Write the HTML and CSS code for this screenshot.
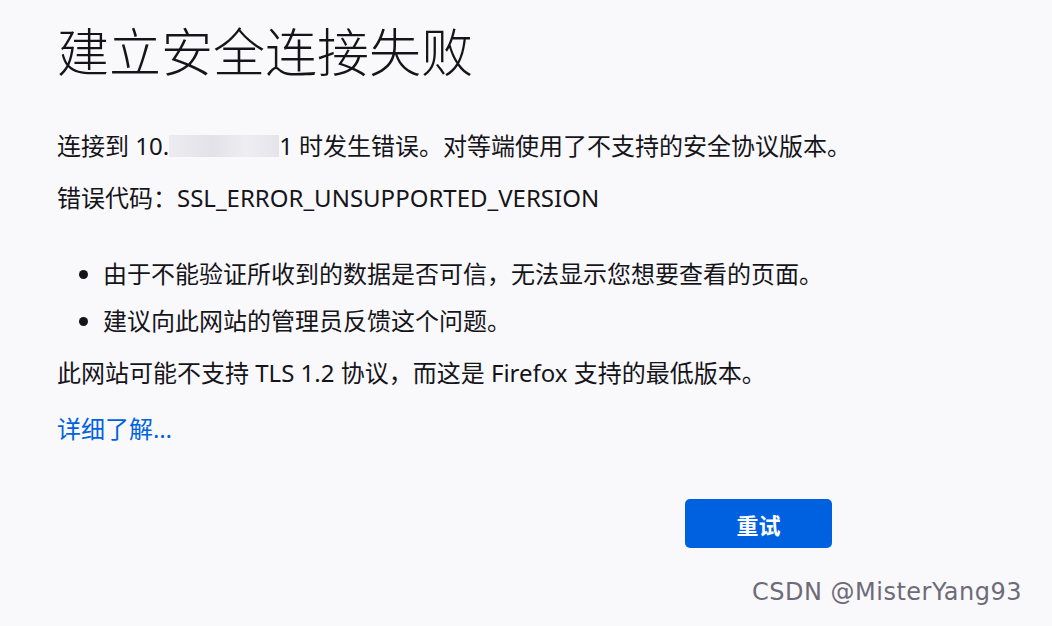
FILE: index.html
```html
<!DOCTYPE html>
<html lang="zh-CN">
<head>
  <meta charset="UTF-8">
  <title>建立安全连接失败</title>
  <link rel="stylesheet" href="styles.css">
</head>
<body>

  <div class="error-page">
    <h1 class="title">建立安全连接失败</h1>

    <p class="desc">连接到 10.<span class="redact"></span>1 时发生错误。对等端使用了不支持的安全协议版本。</p>
    <p class="desc">错误代码：SSL_ERROR_UNSUPPORTED_VERSION</p>

    <ul class="hints">
      <li>由于不能验证所收到的数据是否可信，无法显示您想要查看的页面。</li>
      <li>建议向此网站的管理员反馈这个问题。</li>
    </ul>

    <p class="desc">此网站可能不支持 TLS 1.2 协议，而这是 Firefox 支持的最低版本。</p>

    <p class="more"><a href="#">详细了解…</a></p>

    <div class="actions">
      <button class="retry">重试</button>
    </div>
  </div>

  <div class="watermark">CSDN @MisterYang93</div>

</body>
</html>
```

FILE: styles.css
```css
body {
  margin: 0;
  background-color: #f9f9fb;
  color: #15141a;
  font-family: "Noto Sans", "Noto Sans CJK SC", sans-serif;
  min-height: 100vh;
}

.error-page {
  width: 775px;
  padding: 14px 0 0 57px;
}

.title {
  font-size: 52px;
  font-weight: 300;
  line-height: 76px;
  margin: 0 0 38px;
}

.desc {
  font-size: 24px;
  line-height: 36px;
  margin: 0 0 16px;
  white-space: nowrap;
}

.redact {
  display: inline-block;
  width: 110px;
  height: 22px;
  vertical-align: -2px;
  background: linear-gradient(90deg, #ececf0, #e2e2e8 40%, #eeeef2 70%, #e4e4ea);
}

.hints {
  margin: 40px 0 16px;
  padding-left: 46px;
  font-size: 24px;
  line-height: 36px;
}

.hints li {
  margin-bottom: 11px;
}

.more {
  font-size: 24px;
  line-height: 36px;
  margin: 20px 0 0;
}

.more a {
  color: #0061e0;
  text-decoration: none;
}

.actions {
  display: flex;
  justify-content: flex-end;
  margin-top: 52px;
}

.retry {
  width: 147px;
  height: 49px;
  border: none;
  border-radius: 5px;
  background-color: #0061e0;
  color: #fff;
  font-family: "Noto Sans CJK SC", sans-serif;
  font-size: 22px;
  font-weight: 700;
}

.watermark {
  position: absolute;
  right: 30px;
  bottom: 20px;
  font-family: "DejaVu Sans", sans-serif;
  font-size: 24px;
  color: #6e6a78;
  letter-spacing: 0.5px;
}
```
